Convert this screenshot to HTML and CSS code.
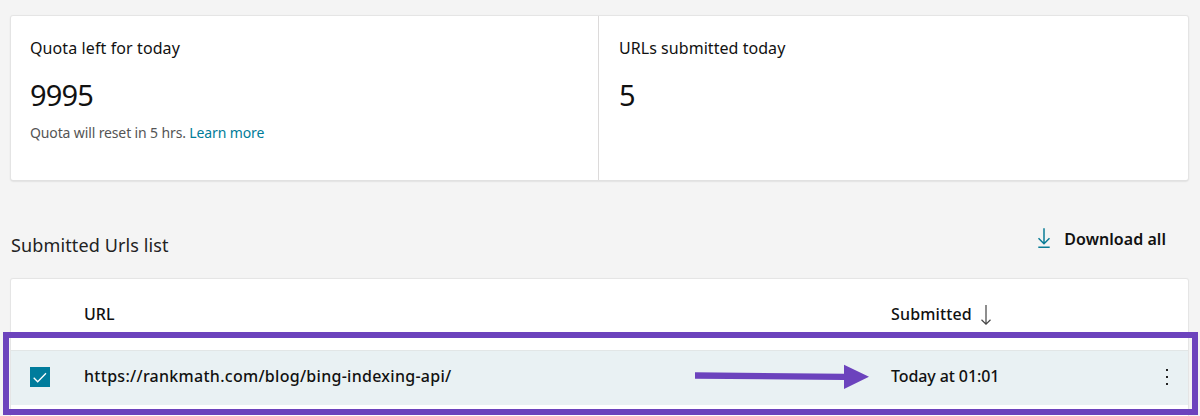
FILE: index.html
```
<!DOCTYPE html>
<html lang="en">
<head>
    <meta charset="UTF-8">
    <meta name="viewport" content="width=device-width, initial-scale=1.0">
    <title>URL Submission</title>
    <link rel="stylesheet" href="styles.css">
</head>
<body>
    <main class="page">
        <section class="quota-card">
            <div class="quota-panel">
                <h2 class="quota-title">Quota left for today</h2>
                <div class="quota-value">9995</div>
                <p class="quota-note"><span>Quota will reset in 5 hrs.</span> <a href="#">Learn more</a></p>
            </div>
            <div class="quota-panel">
                <h2 class="quota-title submitted-title">URLs submitted today</h2>
                <div class="quota-value">5</div>
            </div>
        </section>

        <div class="list-header">
            <h2 class="list-title">Submitted Urls list</h2>
            <button class="download">
                <svg class="download-icon" width="14" height="22" viewBox="0 0 14 22">
                    <path d="M7 0.300v15.700M1.500 10.300L7 15.700l5.500-5.400M1.300 19.300h11.400"/>
                </svg>
                <span>Download all</span>
            </button>
        </div>

        <section class="url-table">
            <div class="table-head">
                <div class="col-url head-url">URL</div>
                <div class="col-date">
                    <span class="head-date">Submitted</span>
                    <svg class="sort-icon" width="12" height="20" viewBox="0 0 12 20">
                        <path d="M6 0v19M1.500 14.800L6 19.200l4.500-4.400"/>
                    </svg>
                </div>
            </div>
            <div class="table-row">
                <div class="col-check">
                    <span class="checkbox">
                        <svg width="20" height="20" viewBox="0 0 20 20"><path d="M3.700 10.800l4 4L16 6.300"/></svg>
                    </span>
                </div>
                <div class="col-url row-url">https://rankmath.com/blog/bing-indexing-api/</div>
                <div class="col-date row-date">Today at 01:01</div>
                <div class="more"><i></i><i></i><i></i></div>
            </div>
        </section>
    </main>

    <!-- highlight around the first row -->
    <div class="highlight"></div>
    <svg class="pointer" width="175" height="26" viewBox="0 0 175 26">
        <path d="M0 8.300L149 9.700V0.700L174 12.800L149 25V15.900L0 14.700z"/>
    </svg>
</body>
</html>
```
FILE: styles.css
```
* {
    box-sizing: border-box;
}
body {
    margin: 0;
    height: 416px;
    overflow: hidden;
    position: relative;
    background: #f4f4f4;
    color: #111;
    font-family: "Noto Sans", "Open Sans", sans-serif;
}
h2, p {
    margin: 0;
    font-weight: 400;
}
.page {
    padding: 16px 12px 0 11px;
}
.quota-card {
    display: flex;
    height: 164px;
    background: #fff;
    border-radius: 2px;
    box-shadow: 0 0 1px 1px #e4e4e4, 0 1px 2px #bbb;
}
.quota-panel {
    width: 587px;
    padding: 19px;
}
.quota-panel + .quota-panel {
    flex: 1;
    border-left: 1px solid #dcdada;
    padding-left: 20px;
}
.quota-title {
    font-size: 16px;
    line-height: 26px;
    letter-spacing: 0.1px;
}
.submitted-title {
    letter-spacing: 0.05px;
}
.quota-value {
    margin-top: 14px;
    font-size: 29px;
    line-height: 40px;
    letter-spacing: -0.8px;
}
.quota-note {
    margin-top: 8px;
    font-size: 14px;
    line-height: 20px;
    letter-spacing: -0.13px;
    color: #555;
}
.quota-note a {
    color: #007c99;
    text-decoration: none;
}
.list-header {
    display: flex;
    justify-content: space-between;
    height: 99px;
    padding-top: 47px;
}
.list-title {
    padding-top: 4px;
    font-size: 18px;
    line-height: 28px;
    letter-spacing: 0.12px;
    color: #222;
}
.download {
    display: flex;
    align-items: center;
    gap: 13px;
    height: 24px;
    margin-right: 22px;
    padding: 0;
    border: 0;
    background: none;
    color: #111;
    font: 600 16px/24px "Noto Sans", "Open Sans", sans-serif;
    letter-spacing: 0.05px;
}
.download-icon {
    fill: none;
    stroke: #0a7c96;
    stroke-width: 1.5;
}
.url-table {
    height: 137px;
    background: #fff;
    border-radius: 2px 2px 0 0;
    box-shadow: 0 0 1px 1px #e4e4e4;
    font-size: 16px;
    font-weight: 500;
}
.table-head {
    display: flex;
    align-items: center;
    height: 71px;
    padding: 0 0 2px 73px;
}
.head-date {
    letter-spacing: 0.15px;
}
.table-row {
    display: flex;
    align-items: center;
    height: 55px;
    padding-bottom: 3px;
    background: #e9f1f3;
    border-top: 1px solid #e2e6e6;
}
.col-check {
    width: 73px;
    padding-left: 19px;
}
.checkbox {
    display: block;
    width: 20px;
    height: 20px;
    background: #007c9c;
}
.checkbox svg {
    display: block;
    fill: none;
    stroke: #fff;
    stroke-width: 1.300;
}
.col-url {
    width: 807px;
}
.row-url {
    padding-bottom: 2px;
    letter-spacing: 0.28px;
}
.col-date {
    display: flex;
    align-items: center;
    flex: 1;
    gap: 8px;
}
.row-date {
    padding-bottom: 2px;
    letter-spacing: -0.1px;
}
.sort-icon {
    position: relative;
    top: 1px;
    fill: none;
    stroke: #444;
    stroke-width: 1.200;
}
.more {
    display: flex;
    flex-direction: column;
    gap: 5px;
    margin-right: 20px;
}
.more i {
    width: 2px;
    height: 2px;
    background: #222;
}
.highlight {
    position: absolute;
    left: 3px;
    top: 332px;
    width: 1195px;
    height: 83px;
    border: 6px solid #6c43bd;
}
.pointer {
    position: absolute;
    left: 695px;
    top: 364px;
    fill: #6c43bd;
}
```
